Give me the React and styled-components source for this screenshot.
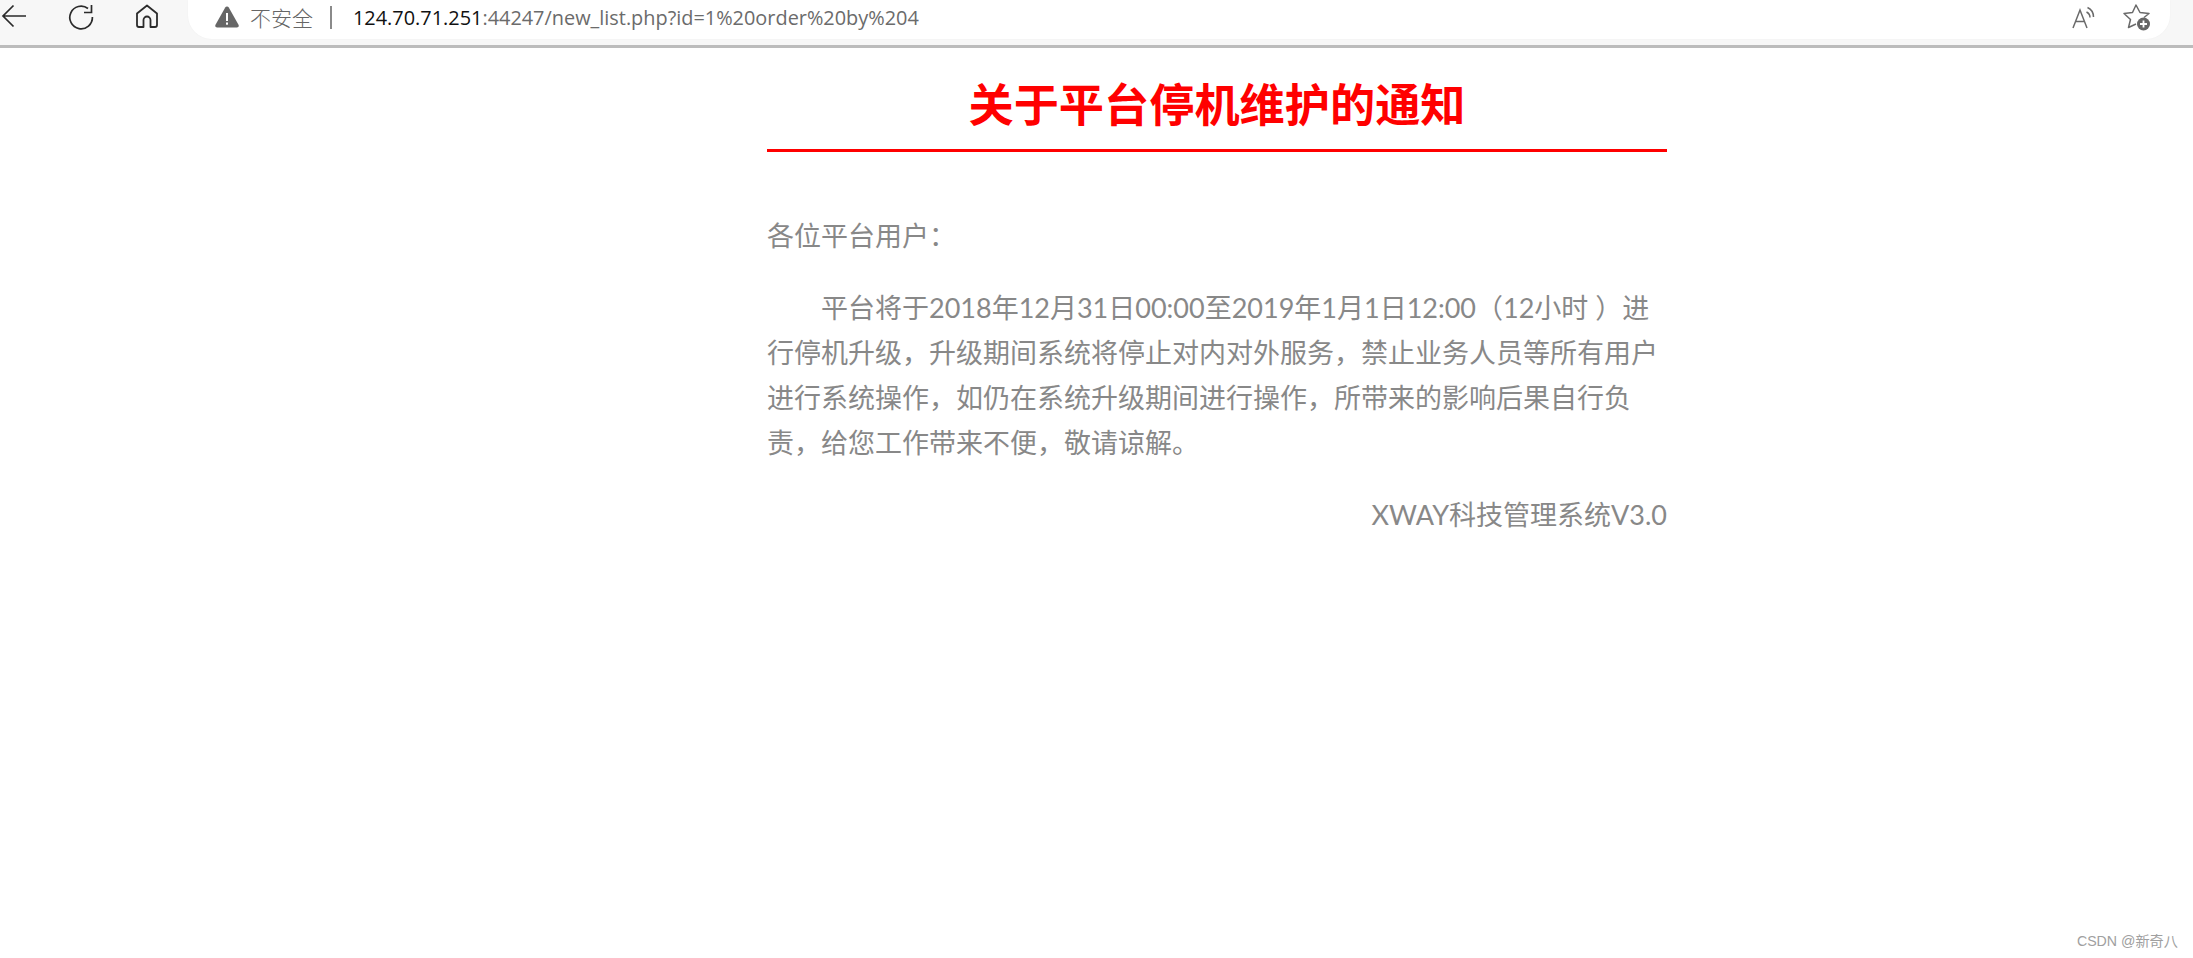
import React from "react";
import styled, { createGlobalStyle } from "styled-components";

const GlobalStyle = createGlobalStyle`
  html, body {
    margin: 0;
    padding: 0;
    background: #fff;
    font-family: "Noto Sans CJK SC", "Noto Sans", sans-serif;
  }
`;

const Page = styled.div`
  width: 2193px;
  height: 958px;
  display: flex;
  flex-direction: column;
  overflow: hidden;
`;

const Toolbar = styled.header`
  box-sizing: border-box;
  height: 48px;
  flex: none;
  display: flex;
  background: #f7f7f7;
  border-bottom: 3px solid #bcbcbc;
  padding-right: 23px;
`;

const NavIcons = styled.nav`
  width: 188px;
  flex: none;
  display: flex;
  align-items: flex-start;
  color: #2b2b2b;
`;

const NavButton = styled.span`
  display: flex;
  margin-left: ${(p) => p.$left}px;
  margin-top: 3px;
`;

const AddressBar = styled.div`
  flex: 1;
  height: 39px;
  background: #fff;
  border-radius: 0 0 24px 24px;
  box-shadow: 0 0 2px rgba(0, 0, 0, 0.04);
  display: flex;
  align-items: center;
  padding: 0 0 5px 27px;
  box-sizing: border-box;
`;

const NotSecure = styled.span`
  margin-left: 11px;
  font-size: 21px;
  font-weight: 300;
  color: #666;
  line-height: 1;
`;

const Separator = styled.span`
  width: 2px;
  height: 23px;
  background: #8a8a8a;
  margin: 0 21px 0 17px;
`;

const Url = styled.span`
  font-family: "Open Sans", "Noto Sans", sans-serif;
  font-size: 19.9px;
  color: #6b6b6b;
  white-space: nowrap;
`;

const Host = styled.span`
  color: #111;
`;

const BarActions = styled.div`
  margin-left: auto;
  display: flex;
  gap: 28px;
  align-items: center;
  padding-right: 19px;
  color: #6a6a6a;
`;

const Notice = styled.main`
  width: 900px;
  margin: 0 0 0 767px;
  color: #888;
`;

const Title = styled.h1`
  margin: 0;
  padding-top: 25px;
  height: 76px;
  box-sizing: content-box;
  border-bottom: 3px solid #f00;
  font-size: 45.2px;
  line-height: 60px;
  font-weight: 700;
  color: #f00;
  text-align: center;
`;

const Paragraph = styled.p`
  margin: 0;
  font-family: "Lato", "Noto Sans CJK SC", sans-serif;
  font-size: 27px;
  line-height: 45px;
  text-indent: ${(p) => (p.$indent ? "54px" : "0")};
  text-align: ${(p) => (p.$right ? "right" : "left")};
  margin-top: ${(p) => p.$top}px;
`;

const Watermark = styled.footer`
  margin-top: auto;
  padding: 0 15px 9px 0;
  align-self: flex-end;
  font-family: "Liberation Sans", "Noto Sans CJK SC", sans-serif;
  font-size: 14.2px;
  line-height: 16px;
  color: #a0a0a0;
`;

const BackIcon = () => (
  <svg width="28" height="28" viewBox="0 0 28 28" fill="none" stroke="currentColor" strokeWidth="1.7">
    <path d="M26 13H3M13.5 2.5 3 13l10.5 10.5" />
  </svg>
);

const RefreshIcon = () => (
  <svg width="28" height="28" viewBox="0 0 28 28" fill="none" stroke="currentColor" strokeWidth="1.7">
    <path d="M21 5.5A11.3 11.3 0 1 0 25.4 14" />
    <path d="M24.5 2v7.5H17" />
  </svg>
);

const HomeIcon = () => (
  <svg width="26" height="26" viewBox="0 0 26 26" fill="none" stroke="currentColor" strokeWidth="1.8" strokeLinejoin="round">
    <path d="M13 2.5 3 10.5v11.500a2 2 0 0 0 2 2h4.500v-7a3.500 3.500 0 0 1 7 0v7H21a2 2 0 0 0 2-2V10.500z" />
  </svg>
);

const WarningIcon = () => (
  <svg width="24" height="22" viewBox="0 0 24 22">
    <path d="M12 .5c.8 0 1.400.4 1.800 1.100l9.700 17.200c.7 1.300-.1 2.700-1.600 2.700H2.100c-1.500 0-2.300-1.400-1.600-2.700L10.200 1.600C10.600.9 11.200.5 12 .5z" fill="#666" />
    <rect x="11" y="7" width="2" height="8" fill="#fff" />
    <rect x="11" y="16.500" width="2" height="2.200" fill="#fff" />
  </svg>
);

const ReadAloudIcon = () => (
  <svg width="23" height="23" viewBox="0 0 23 23" fill="none" stroke="currentColor" strokeWidth="1.500">
    <path d="M1 22 8 4l7 18M3.500 15.500h9" />
    <path d="M14.500 6c2.200 1.100 3.500 3 3.500 5.500M15.500 1.500c3.700 1.700 6 5 6 9.500" />
  </svg>
);

const FavoriteIcon = () => (
  <svg width="28" height="27" viewBox="0 0 28 27" fill="none">
    <path d="M21 13.500 26 9.500 17 8.500 13 1 9.500 8.500 1 9.500l6.500 6L5.500 23.500 13 20" stroke="#6a6a6a" strokeWidth="1.500" strokeLinejoin="round" />
    <circle cx="20.500" cy="20" r="6.500" fill="#666" />
    <path d="M20.500 16.500v7M17 20h7" stroke="#fff" strokeWidth="1.800" />
  </svg>
);

export default function App() {
  return (
    <Page>
      <GlobalStyle />
      <Toolbar>
        <NavIcons>
          <NavButton $left={0}><BackIcon /></NavButton>
          <NavButton $left={39}><RefreshIcon /></NavButton>
          <NavButton $left={39}><HomeIcon /></NavButton>
        </NavIcons>
        <AddressBar>
          <WarningIcon />
          <NotSecure>不安全</NotSecure>
          <Separator />
          <Url>
            <Host>124.70.71.251</Host>:44247/new_list.php?id=1%20order%20by%204
          </Url>
          <BarActions>
            <ReadAloudIcon />
            <FavoriteIcon />
          </BarActions>
        </AddressBar>
      </Toolbar>
      <Notice>
        <Title>关于平台停机维护的通知</Title>
        <Paragraph $top={61}>各位平台用户：</Paragraph>
        <Paragraph $top={27} $indent>
          平台将于2018年12月31日00:00至2019年1月1日12:00（12小时 ）进行停机升级，升级期间系统将停止对内对外服务，禁止业务人员等所有用户进行系统操作，如仍在系统升级期间进行操作，所带来的影响后果自行负责，给您工作带来不便，敬请谅解。
        </Paragraph>
        <Paragraph $top={27} $right>XWAY科技管理系统V3.0</Paragraph>
      </Notice>
      <Watermark>CSDN @新奇八</Watermark>
    </Page>
  );
}
